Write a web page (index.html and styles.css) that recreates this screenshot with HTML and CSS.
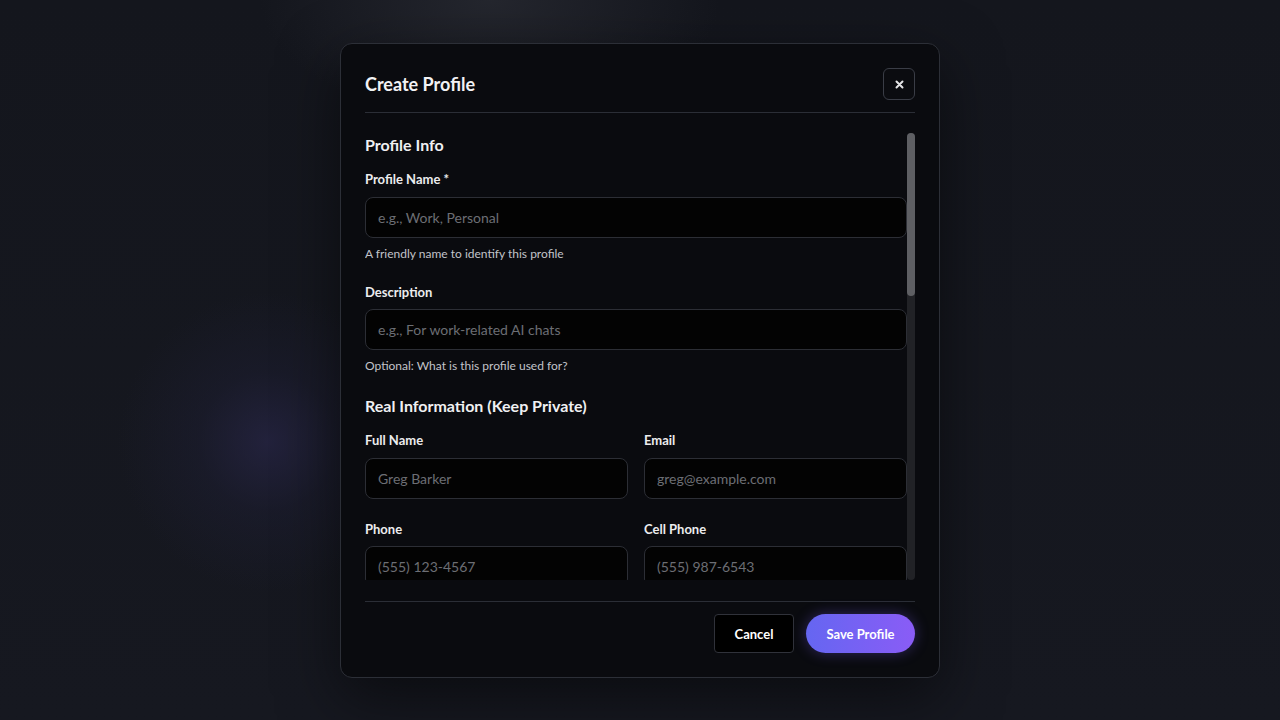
FILE: index.html
```html
<!DOCTYPE html>
<html lang="en">
<head>
<meta charset="utf-8">
<title>Create Profile</title>
<link rel="stylesheet" href="styles.css">
</head>
<body>
<div class="backdrop">
  <div class="modal" role="dialog" aria-labelledby="modal-title">
    <header class="modal-header">
      <h2 id="modal-title" class="modal-title">Create Profile</h2>
      <button class="close-btn" aria-label="Close">
        <svg width="9" height="9" viewBox="0 0 9 9"><path d="M1.5 1.5 L7.5 7.5 M7.5 1.5 L1.5 7.5" stroke="#e4e4e6" stroke-width="2" stroke-linecap="round"/></svg>
      </button>
    </header>

    <div class="body-wrap">
      <div class="modal-body">
        <section class="section">
          <h3 class="section-title">Profile Info</h3>
          <div class="field">
            <label class="label">Profile Name *</label>
            <input class="input" type="text" placeholder="e.g., Work, Personal">
            <p class="hint">A friendly name to identify this profile</p>
          </div>
          <div class="field">
            <label class="label">Description</label>
            <input class="input" type="text" placeholder="e.g., For work-related AI chats">
            <p class="hint">Optional: What is this profile used for?</p>
          </div>
        </section>

        <section class="section">
          <h3 class="section-title">Real Information (Keep Private)</h3>
          <div class="grid">
            <div class="field">
              <label class="label">Full Name</label>
              <input class="input" type="text" placeholder="Greg Barker">
            </div>
            <div class="field">
              <label class="label">Email</label>
              <input class="input" type="text" placeholder="greg@example.com">
            </div>
            <div class="field">
              <label class="label">Phone</label>
              <input class="input" type="text" placeholder="(555) 123-4567">
            </div>
            <div class="field">
              <label class="label">Cell Phone</label>
              <input class="input" type="text" placeholder="(555) 987-6543">
            </div>
          </div>
          <div class="field">
            <label class="label">Address</label>
            <input class="input" type="text" placeholder="123 Main Street">
          </div>
          <div class="grid">
            <div class="field">
              <label class="label">City</label>
              <input class="input" type="text" placeholder="Springfield">
            </div>
            <div class="field">
              <label class="label">State</label>
              <input class="input" type="text" placeholder="IL">
            </div>
          </div>
        </section>

        <section class="section">
          <h3 class="section-title">Replacement Information</h3>
          <div class="grid">
            <div class="field">
              <label class="label">Fake Name</label>
              <input class="input" type="text" placeholder="John Doe">
            </div>
            <div class="field">
              <label class="label">Fake Email</label>
              <input class="input" type="text" placeholder="john@example.com">
            </div>
          </div>
        </section>
      </div>
      <div class="scrollbar" aria-hidden="true"><div class="scrollbar-thumb"></div></div>
    </div>

    <footer class="modal-footer">
      <button class="btn btn-cancel">Cancel</button>
      <button class="btn btn-primary">Save Profile</button>
    </footer>
  </div>
</div>
</body>
</html>
```

FILE: styles.css
```css
* { box-sizing: border-box; }

html, body {
  margin: 0;
  height: 100%;
}

body {
  font-family: Lato, "Liberation Sans", sans-serif;
  color: #ececee;
  background-color: #15171e;
  background-image:
    radial-gradient(circle at 268px 442px, rgba(40, 38, 72, 0.7) 0, rgba(32, 32, 58, 0.35) 70px, rgba(21, 23, 30, 0) 150px),
    radial-gradient(ellipse 230px 120px at 490px 0px, rgba(42, 44, 52, 0.75), rgba(21, 23, 30, 0) 100%),
    linear-gradient(180deg, #14161d 0%, #161820 100%);
  overflow: hidden;
}

.backdrop {
  height: 100%;
  padding-top: 1px;
  display: flex;
  align-items: center;
  justify-content: center;
}

.modal {
  width: 600px;
  height: 635px;
  background: #0a0b0f;
  border: 1px solid #2c2f37;
  border-radius: 12px;
  box-shadow: 0 20px 60px rgba(0, 0, 0, 0.5);
  display: flex;
  flex-direction: column;
  padding: 24px;
}

.modal-header {
  display: flex;
  align-items: center;
  justify-content: space-between;
  padding-bottom: 12px;
  border-bottom: 1px solid #2b2e36;
  margin-bottom: 20px;
}

.modal-title {
  margin: 0;
  font-size: 18px;
  font-weight: 700;
  color: #f2f2f4;
  line-height: 24px;
}

.close-btn {
  width: 32px;
  height: 32px;
  border-radius: 6px;
  border: 1px solid #3a3d46;
  background: #0b0c10;
  display: flex;
  align-items: center;
  justify-content: center;
  padding: 0;
  cursor: pointer;
}

.body-wrap {
  flex: 1;
  min-height: 0;
  position: relative;
}

.modal-body {
  height: 100%;
  overflow: hidden;
  padding-right: 8px;
}

.scrollbar {
  position: absolute;
  top: 0;
  right: 0;
  bottom: 0;
  width: 8px;
  border-radius: 4px;
  background: #212226;
}

.scrollbar-thumb {
  height: 163px;
  border-radius: 4px;
  background: #5e5f63;
}

.section-title {
  margin: 0 0 12px;
  font-size: 16px;
  font-weight: 700;
  line-height: 24px;
  color: #f0f0f2;
}

.field {
  display: flex;
  flex-direction: column;
  margin-bottom: 20px;
}

.label {
  font-size: 13px;
  font-weight: 700;
  line-height: 20px;
  margin-bottom: 7.5px;
  color: #ececee;
}

.input {
  height: 41px;
  width: 100%;
  background: #030303;
  border: 1px solid #2c2e35;
  border-radius: 8px;
  padding: 0 12px;
  font-family: inherit;
  font-size: 14px;
  color: #e0e0e0;
  outline: none;
}

.input::placeholder {
  color: #6c6e74;
}

.hint {
  margin: 7px 0 0;
  font-size: 12px;
  line-height: 17px;
  color: #c2c4ca;
}

.grid {
  display: grid;
  grid-template-columns: 1fr 1fr;
  column-gap: 16px;
}

.modal-footer {
  margin-top: 21px;
  border-top: 1px solid #2b2e36;
  padding-top: 12px;
  display: flex;
  justify-content: flex-end;
  gap: 12px;
}

.btn {
  height: 39px;
  font-family: inherit;
  font-size: 13px;
  font-weight: 700;
  color: #ffffff;
  cursor: pointer;
}

.btn-cancel {
  width: 80px;
  background: #000;
  border: 1px solid #30323a;
  border-radius: 4px;
}

.btn-primary {
  width: 109px;
  border: none;
  border-radius: 20px;
  background: linear-gradient(90deg, #6566f1 0%, #8a5cf6 100%);
  box-shadow: 0 0 14px rgba(120, 92, 246, 0.35);
}
```
